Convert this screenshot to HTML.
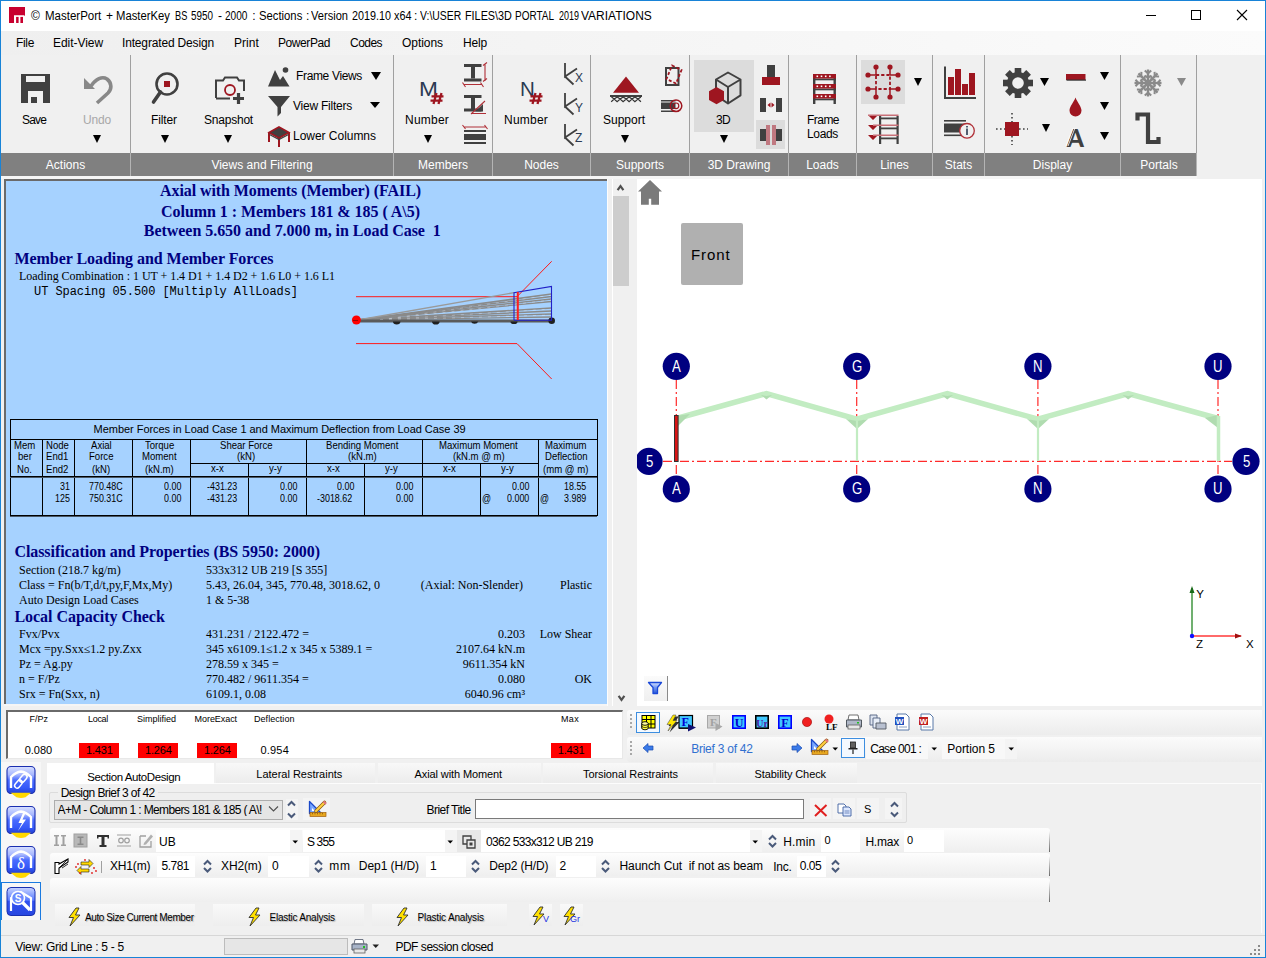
<!DOCTYPE html>
<html><head><meta charset="utf-8">
<style>
*{margin:0;padding:0;box-sizing:border-box}
html,body{width:1266px;height:958px;overflow:hidden;background:#f0f0f0;font-family:"Liberation Sans",sans-serif;font-size:12px;color:#000;position:relative}
.a{position:absolute}
.t{position:absolute;white-space:pre;line-height:1}
svg{position:absolute;overflow:visible}
#border{position:absolute;left:0;top:0;width:1266px;height:958px;border:1px solid #1883d7;z-index:100;pointer-events:none}

</style></head><body>
<div class="a" style="left:0;top:0;width:1266px;height:31px;background:#fff"></div>
<svg style="left:9px;top:7px" width="16" height="16"><path fill="#c8002f" d="M0 0H16V8.3L15.2 9.3V8.2H5V16H0Z"/><rect fill="#c8002f" x="7.1" y="9.9" width="2.5" height="6.1"/><rect fill="#c8002f" x="11.4" y="9.9" width="2.6" height="6.1"/></svg>
<div class="t" style="left:30.90px;top:10.00px;font-size:12px;">©</div>
<div class="t" style="left:44.70px;top:10.00px;font-size:12px;transform:scaleX(0.9593);transform-origin:0 0;">MasterPort</div>
<div class="t" style="left:106.00px;top:10.00px;font-size:12px;">+</div>
<div class="t" style="left:116.20px;top:10.00px;font-size:12px;transform:scaleX(0.9397);transform-origin:0 0;">MasterKey</div>
<div class="t" style="left:174.60px;top:10.00px;font-size:12px;transform:scaleX(0.7680);transform-origin:0 0;">BS</div>
<div class="t" style="left:190.80px;top:10.00px;font-size:12px;transform:scaleX(0.8239);transform-origin:0 0;">5950</div>
<div class="t" style="left:218.00px;top:10.00px;font-size:12px;">-</div>
<div class="t" style="left:225.20px;top:10.00px;font-size:12px;transform:scaleX(0.8426);transform-origin:0 0;">2000</div>
<div class="t" style="left:252.30px;top:10.00px;font-size:12px;">:</div>
<div class="t" style="left:258.90px;top:10.00px;font-size:12px;transform:scaleX(0.9407);transform-origin:0 0;">Sections</div>
<div class="t" style="left:305.90px;top:10.00px;font-size:12px;">:</div>
<div class="t" style="left:311.20px;top:10.00px;font-size:12px;transform:scaleX(0.9243);transform-origin:0 0;">Version</div>
<div class="t" style="left:352.30px;top:10.00px;font-size:12px;transform:scaleX(0.8988);transform-origin:0 0;">2019.10</div>
<div class="t" style="left:394.00px;top:10.00px;font-size:12px;transform:scaleX(0.9040);transform-origin:0 0;">x64</div>
<div class="t" style="left:413.90px;top:10.00px;font-size:12px;">:</div>
<div class="t" style="left:420.20px;top:10.00px;font-size:12px;transform:scaleX(0.8659);transform-origin:0 0;">V:\USER</div>
<div class="t" style="left:464.80px;top:10.00px;font-size:12px;transform:scaleX(0.9014);transform-origin:0 0;">FILES\3D</div>
<div class="t" style="left:515.20px;top:10.00px;font-size:12px;transform:scaleX(0.8314);transform-origin:0 0;">PORTAL</div>
<div class="t" style="left:558.60px;top:10.00px;font-size:12px;transform:scaleX(0.7452);transform-origin:0 0;">2019</div>
<div class="t" style="left:580.70px;top:10.00px;font-size:12px;transform:scaleX(0.9985);transform-origin:0 0;">VARIATIONS</div>
<div class="a" style="left:1146px;top:15px;width:10px;height:1px;background:#000"></div>
<div class="a" style="left:1191px;top:10px;width:10px;height:10px;border:1px solid #000"></div>
<svg style="left:1237px;top:10px" width="10" height="10"><path d="M0 0L10 10M10 0L0 10" stroke="#000" stroke-width="1.1"/></svg>
<div class="a" style="left:0;top:31px;width:1266px;height:24px;background:linear-gradient(90deg,#efefef,#fbfbfb)"></div>
<div class="t" style="left:16.00px;top:37.00px;font-size:12px;letter-spacing:-0.336px;">File</div>
<div class="t" style="left:53.00px;top:37.00px;font-size:12px;letter-spacing:-0.052px;">Edit-View</div>
<div class="t" style="left:122.00px;top:37.00px;font-size:12px;letter-spacing:-0.161px;">Integrated Design</div>
<div class="t" style="left:234.00px;top:37.00px;font-size:12px;letter-spacing:0.062px;">Print</div>
<div class="t" style="left:278.00px;top:37.00px;font-size:12px;letter-spacing:-0.422px;">PowerPad</div>
<div class="t" style="left:350.00px;top:37.00px;font-size:12px;letter-spacing:-0.537px;">Codes</div>
<div class="t" style="left:402.00px;top:37.00px;font-size:12px;letter-spacing:-0.051px;">Options</div>
<div class="t" style="left:463.00px;top:37.00px;font-size:12px;letter-spacing:-0.172px;">Help</div>
<div class="a" style="left:0;top:55px;width:1266px;height:98px;background:#f0f0f0"></div>
<div class="a" style="left:0;top:153px;width:1197px;height:23px;background:#808080"></div>
<div class="t" style="left:45.82px;top:159.00px;font-size:12px;color:#fff;">Actions</div>
<div class="t" style="left:211.41px;top:159.00px;font-size:12px;color:#fff;">Views and Filtering</div>
<div class="t" style="left:417.99px;top:159.00px;font-size:12px;color:#fff;">Members</div>
<div class="t" style="left:524.16px;top:159.00px;font-size:12px;color:#fff;">Nodes</div>
<div class="t" style="left:615.98px;top:159.00px;font-size:12px;color:#fff;">Supports</div>
<div class="t" style="left:707.65px;top:159.00px;font-size:12px;color:#fff;">3D Drawing</div>
<div class="t" style="left:806.15px;top:159.00px;font-size:12px;color:#fff;">Loads</div>
<div class="t" style="left:880.16px;top:159.00px;font-size:12px;color:#fff;">Lines</div>
<div class="t" style="left:944.82px;top:159.00px;font-size:12px;color:#fff;">Stats</div>
<div class="t" style="left:1032.82px;top:159.00px;font-size:12px;color:#fff;">Display</div>
<div class="t" style="left:1140.32px;top:159.00px;font-size:12px;color:#fff;">Portals</div>
<div class="a" style="left:130px;top:55px;width:1px;height:98px;background:#a0a0a0"></div>
<div class="a" style="left:130px;top:153px;width:1px;height:23px;background:#b4b4b4"></div>
<div class="a" style="left:393px;top:55px;width:1px;height:98px;background:#a0a0a0"></div>
<div class="a" style="left:393px;top:153px;width:1px;height:23px;background:#b4b4b4"></div>
<div class="a" style="left:492px;top:55px;width:1px;height:98px;background:#a0a0a0"></div>
<div class="a" style="left:492px;top:153px;width:1px;height:23px;background:#b4b4b4"></div>
<div class="a" style="left:590px;top:55px;width:1px;height:98px;background:#a0a0a0"></div>
<div class="a" style="left:590px;top:153px;width:1px;height:23px;background:#b4b4b4"></div>
<div class="a" style="left:689px;top:55px;width:1px;height:98px;background:#a0a0a0"></div>
<div class="a" style="left:689px;top:153px;width:1px;height:23px;background:#b4b4b4"></div>
<div class="a" style="left:788px;top:55px;width:1px;height:98px;background:#a0a0a0"></div>
<div class="a" style="left:788px;top:153px;width:1px;height:23px;background:#b4b4b4"></div>
<div class="a" style="left:856px;top:55px;width:1px;height:98px;background:#a0a0a0"></div>
<div class="a" style="left:856px;top:153px;width:1px;height:23px;background:#b4b4b4"></div>
<div class="a" style="left:932px;top:55px;width:1px;height:98px;background:#a0a0a0"></div>
<div class="a" style="left:932px;top:153px;width:1px;height:23px;background:#b4b4b4"></div>
<div class="a" style="left:984px;top:55px;width:1px;height:98px;background:#a0a0a0"></div>
<div class="a" style="left:984px;top:153px;width:1px;height:23px;background:#b4b4b4"></div>
<div class="a" style="left:1120px;top:55px;width:1px;height:98px;background:#a0a0a0"></div>
<div class="a" style="left:1120px;top:153px;width:1px;height:23px;background:#b4b4b4"></div>
<div class="a" style="left:1196px;top:55px;width:1px;height:98px;background:#a0a0a0"></div>
<div class="a" style="left:1196px;top:153px;width:1px;height:23px;background:#b4b4b4"></div>
<div class="a" style="left:1px;top:176px;width:1196px;height:3px;background:#f5f5f5"></div>
<svg style="left:21px;top:74px" width="29" height="29"><path fill="#404040" fill-rule="evenodd" d="M0 0H29V29H22V17H7V29H0Z M5 2V8H24V2Z"/><rect x="10" y="23" width="6" height="6" fill="#404040"/></svg>
<div class="t" style="left:22.00px;top:114.00px;font-size:12px;letter-spacing:-0.840px;">Save</div>
<svg style="left:84px;top:75px" width="29" height="29"><path d="M0 3L11 14H0Z" fill="#888"/><path d="M7 11C12 4 18 1 23 4C28 8 28 14 24 18L13 28" stroke="#888" stroke-width="3.6" fill="none"/></svg>
<div class="t" style="left:83.00px;top:114.00px;font-size:12px;color:#a8a8a8;letter-spacing:-0.172px;">Undo</div>
<svg style="left:0;top:0" width="1" height="1"><path d="M93 135H101L97.0 143Z" fill="#000"/></svg>
<svg style="left:150px;top:70px" width="30" height="36"><circle cx="17" cy="14" r="10.5" stroke="#404040" stroke-width="2.6" fill="none"/><path d="M10.5 22L3.5 32" stroke="#404040" stroke-width="3.6" stroke-linecap="round"/><rect x="14" y="11" width="6" height="6" fill="#9e1620"/></svg>
<div class="t" style="left:151.00px;top:114.00px;font-size:12px;letter-spacing:-0.112px;">Filter</div>
<svg style="left:0;top:0" width="1" height="1"><path d="M161 135H169L165.0 143Z" fill="#000"/></svg>
<svg style="left:214px;top:76px" width="34" height="30"><path d="M2 22V4.5H9L11 1.5H23L25 4.5H30V15" stroke="#404040" stroke-width="2" fill="none"/><path d="M2 22.5H16" stroke="#404040" stroke-width="2"/><circle cx="16" cy="14" r="5" stroke="#9e1620" stroke-width="1.8" fill="none"/><path d="M19 22.5H30M24.5 17V28" stroke="#404040" stroke-width="3.2"/></svg>
<div class="t" style="left:204.00px;top:114.00px;font-size:12px;letter-spacing:-0.215px;">Snapshot</div>
<svg style="left:0;top:0" width="1" height="1"><path d="M224 135H232L228.0 143Z" fill="#000"/></svg>
<svg style="left:268px;top:66px" width="24" height="22"><path d="M0 20.5L7 4L12 14L15 10L21.5 20.5Z" fill="#404040"/><circle cx="17.5" cy="4" r="2.8" fill="#404040"/></svg>
<div class="t" style="left:296.00px;top:70.00px;font-size:12px;letter-spacing:-0.345px;">Frame Views</div>
<svg style="left:0;top:0" width="1" height="1"><path d="M371 72H381L376.0 80Z" fill="#000"/></svg>
<svg style="left:268px;top:96px" width="24" height="22"><path d="M0 0H22L13 11V17L9.5 20.5V11Z" fill="#404040"/></svg>
<div class="t" style="left:293.00px;top:100.00px;font-size:12px;letter-spacing:-0.233px;">View Filters</div>
<svg style="left:0;top:0" width="1" height="1"><path d="M370 102H380L375.0 108Z" fill="#000"/></svg>
<svg style="left:268px;top:125px" width="24" height="25"><path d="M11 2L21 7.5L11 13L1 7.5Z" fill="#404040" stroke="#9e1620" stroke-width="1.6"/><path d="M1 8V17M21 8V17M11 13V22" stroke="#9e1620" stroke-width="2"/><path d="M1.5 9.5L11 14.5L20.5 9.5" stroke="#404040" stroke-width="1.4" fill="none"/></svg>
<div class="t" style="left:293.00px;top:130.00px;font-size:12px;letter-spacing:-0.029px;">Lower Columns</div>
<div class="t" style="left:419px;top:78px;font-size:21px;color:#2b3a52;transform:scaleX(1.08);transform-origin:0 0">M</div>
<svg style="left:430px;top:92px" width="15" height="13"><path d="M6.5 1L3.5 12M11.5 1L8.5 12M1.5 4.3H13.5M0.5 8.6H12.5" stroke="#9e1620" stroke-width="2.3"/></svg>
<div class="t" style="left:405.00px;top:114.00px;font-size:12px;letter-spacing:0.219px;">Number</div>
<svg style="left:0;top:0" width="1" height="1"><path d="M424 135H432L428.0 143Z" fill="#000"/></svg>
<svg style="left:462px;top:62px" width="28" height="85"><g fill="#404040"><rect x="2" y="2" width="17.5" height="3"/><rect x="9" y="5" width="4" height="11.5"/><rect x="2" y="16.5" width="17.5" height="3"/><rect x="2" y="33" width="17.5" height="3"/><rect x="9" y="36" width="4" height="11.5"/><rect x="2" y="46.5" width="17.5" height="3"/><path d="M13 49.5L21 49.5L21 42Z"/><rect x="2" y="68" width="22" height="2"/><rect x="2" y="72" width="22" height="6"/><rect x="2" y="80" width="22" height="2"/></g><g stroke="#b03038" stroke-width="1.1" fill="none"><path d="M23 2.5V19M21 3.5L25 0.5M21 19.5L25 16.5M2 22.5H20M0.5 20.5L3.5 25M18.5 20.5L21.5 25"/><path d="M9 52L23 39M9 51.5H24"/><path d="M2 65H24M0.5 63L3.5 67M22.5 63L25.5 67"/></g></svg>
<div class="t" style="left:520px;top:78.5px;font-size:20.5px;color:#2b3a52">N</div>
<svg style="left:529px;top:92px" width="15" height="13"><path d="M6.5 1L3.5 12M11.5 1L8.5 12M1.5 4.3H13.5M0.5 8.6H12.5" stroke="#9e1620" stroke-width="2.3"/></svg>
<div class="t" style="left:504.00px;top:114.00px;font-size:12px;letter-spacing:0.219px;">Number</div>
<svg style="left:563px;top:63.0px" width="24" height="24"><path d="M2 0V13.5L14 5.5M2 13.5L10.5 21.5" stroke="#404040" stroke-width="1.8" fill="none"/></svg>
<div class="t" style="left:575px;top:71.5px;font-size:12px;color:#2b3a52">X</div>
<svg style="left:563px;top:93.3px" width="24" height="24"><path d="M2 0V13.5L14 5.5M2 13.5L10.5 21.5" stroke="#404040" stroke-width="1.8" fill="none"/></svg>
<div class="t" style="left:575px;top:101.8px;font-size:12px;color:#2b3a52">Y</div>
<svg style="left:563px;top:123.6px" width="24" height="24"><path d="M2 0V13.5L14 5.5M2 13.5L10.5 21.5" stroke="#404040" stroke-width="1.8" fill="none"/></svg>
<div class="t" style="left:575px;top:132.1px;font-size:12px;color:#2b3a52">Z</div>
<svg style="left:609px;top:75px" width="36" height="30"><path d="M17 1.5L30 17.8H4Z" fill="#9e1620"/><rect x="1" y="20" width="32" height="2" fill="#404040"/><path d="M2.2 26.7L5.2 24.0L8.1 26.7L11.2 24.0L14.1 26.7L17.2 24.0L20.1 26.7L23.0 24.0L25.9 26.7L29.0 24.0L31.9 26.7M2.5 22.0L5.2 24.0L8.1 22.0L11.2 24.0L14.1 22.0L17.2 24.0L20.1 22.0L23.0 24.0L25.9 22.0L29.0 24.0L31.9 22.0" stroke="#333" stroke-width="1.2" fill="none"/></svg>
<div class="t" style="left:603.00px;top:114.00px;font-size:12px;letter-spacing:-0.004px;">Support</div>
<svg style="left:0;top:0" width="1" height="1"><path d="M621 135H629L625.0 143Z" fill="#000"/></svg>
<svg style="left:663px;top:63px" width="26" height="26"><rect x="3" y="5" width="12.5" height="17" stroke="#404040" stroke-width="2" fill="none"/><path d="M9 2.5L18.5 7L13 20.5L3.5 16Z" stroke="#9e1620" stroke-width="1.8" stroke-dasharray="3 2" fill="none"/></svg>
<svg style="left:660px;top:98px" width="26" height="17"><rect x="1" y="2" width="14.5" height="1.5" fill="#404040"/><rect x="1" y="4.5" width="14.5" height="6.5" fill="#404040"/><rect x="1" y="12.5" width="14.5" height="1.5" fill="#404040"/><circle cx="16" cy="7.8" r="5.8" stroke="#9e1620" stroke-width="1.5" fill="none"/><circle cx="16" cy="7.8" r="2.8" stroke="#9e1620" stroke-width="1.2" fill="none"/></svg>
<div class="a" style="left:694px;top:60px;width:60px;height:72px;background:#dcdcdc"></div>
<svg style="left:706px;top:70px" width="40" height="40"><path d="M10 9.5L22 2.5L34.5 9.5V25.3L22 33.5L10 25.3Z M10 9.5L22 17L34.5 9.5 M22 17V33.5" stroke="#404040" stroke-width="2" fill="none" stroke-linejoin="round"/><path d="M10.5 17L18 21.3V30L10.5 34.3L3 30V21.3Z" fill="#9e1620"/></svg>
<div class="t" style="left:716.00px;top:114.00px;font-size:12px;letter-spacing:-0.672px;">3D</div>
<svg style="left:0;top:0" width="1" height="1"><path d="M720 135H728L724.0 143Z" fill="#000"/></svg>
<svg style="left:760px;top:63px" width="26" height="86"><rect x="7" y="2" width="8" height="12" fill="#404040"/><rect x="2" y="14" width="18" height="8" fill="#9e1620"/><rect x="0" y="35" width="6" height="14" fill="#404040"/><rect x="16" y="35" width="6" height="14" fill="#404040"/><path d="M7.5 42L10.5 39.5V44.5ZM14.5 42L11.5 39.5V44.5Z" fill="#9e1620"/></svg>
<div class="a" style="left:756px;top:120px;width:29px;height:29px;background:#dcdcdc"></div>
<svg style="left:756px;top:120px" width="29" height="29"><rect x="4" y="9" width="6" height="12" fill="#404040"/><rect x="20" y="9" width="6" height="12" fill="#404040"/><rect x="10" y="5" width="4" height="20" fill="#c07880"/><rect x="16" y="5" width="4" height="20" fill="#c07880"/></svg>
<svg style="left:812px;top:73px" width="25" height="32"><g fill="#404040"><rect x="1" y="1" width="2.4" height="30"/><rect x="21.5" y="1" width="2.4" height="30"/><rect x="1" y="5.5" width="23" height="1.8"/><rect x="1" y="15.5" width="23" height="1.8"/><rect x="1" y="25.5" width="23" height="1.8"/></g><g fill="#9e1620"><rect x="1" y="1" width="23" height="4.5"/><rect x="1" y="11" width="23" height="4.5"/><rect x="1" y="21" width="23" height="4.5"/></g><g fill="#fff"><rect x="4.5" y="2.5" width="1.6" height="1.6"/><rect x="8.7" y="2.5" width="1.6" height="1.6"/><rect x="12.9" y="2.5" width="1.6" height="1.6"/><rect x="17.1" y="2.5" width="1.6" height="1.6"/><rect x="4.5" y="12.5" width="1.6" height="1.6"/><rect x="8.7" y="12.5" width="1.6" height="1.6"/><rect x="12.9" y="12.5" width="1.6" height="1.6"/><rect x="17.1" y="12.5" width="1.6" height="1.6"/><rect x="4.5" y="22.5" width="1.6" height="1.6"/><rect x="8.7" y="22.5" width="1.6" height="1.6"/><rect x="12.9" y="22.5" width="1.6" height="1.6"/><rect x="17.1" y="22.5" width="1.6" height="1.6"/></g></svg>
<div class="t" style="left:807.00px;top:114.00px;font-size:12px;letter-spacing:-0.534px;">Frame</div>
<div class="t" style="left:807.00px;top:128.00px;font-size:12px;letter-spacing:-0.341px;">Loads</div>
<div class="a" style="left:861px;top:60px;width:44px;height:44px;background:#dcdcdc"></div>
<svg style="left:861px;top:60px" width="44" height="44"><path d="M15 15H29V29H15Z" stroke="#9e1620" stroke-width="1.8" stroke-dasharray="3.2 2" fill="none"/><g stroke="#9e1620" stroke-width="1.5"><path d="M15 7V15M29 7V15M15 29V37M29 29V37M7 15H15M29 15H37M7 29H15M29 29H37"/></g><g fill="#9e1620"><circle cx="15" cy="7" r="2.6"/><circle cx="29" cy="7" r="2.6"/><circle cx="15" cy="37" r="2.6"/><circle cx="29" cy="37" r="2.6"/><circle cx="7" cy="15" r="2.6"/><circle cx="37" cy="15" r="2.6"/><circle cx="7" cy="29" r="2.6"/><circle cx="37" cy="29" r="2.6"/></g></svg>
<svg style="left:0;top:0" width="1" height="1"><path d="M914 78H922L918.0 86Z" fill="#000"/></svg>
<svg style="left:867px;top:114px" width="34" height="32"><g fill="#404040"><rect x="12" y="2" width="2.2" height="28"/><rect x="29.5" y="2" width="2.2" height="28"/><rect x="12" y="3.5" width="19" height="1.8"/><rect x="12" y="13.5" width="19" height="1.8"/><rect x="12" y="23.5" width="19" height="1.8"/></g><g fill="#9e1620"><path d="M1 1H11L6 6Z M1 11H11L6 16Z M1 21H11L6 26Z"/></g><g fill="#c87078"><rect x="1" y="0.5" width="30.5" height="1.5"/><rect x="6" y="10.5" width="25.5" height="1.5"/><rect x="6" y="20.5" width="25.5" height="1.5"/></g></svg>
<svg style="left:943px;top:66px" width="36" height="34"><path d="M2 0.5V32H33" stroke="#404040" stroke-width="2" fill="none"/><g fill="#9e1620"><rect x="5" y="11" width="6" height="18"/><rect x="12" y="3" width="6" height="26"/><rect x="19" y="18" width="6" height="11"/><rect x="26" y="7" width="6" height="22"/></g></svg>
<svg style="left:943px;top:119px" width="34" height="22"><g fill="#404040"><rect x="1" y="1" width="22" height="1.6"/><rect x="1" y="4.5" width="22" height="9"/><rect x="1" y="15.5" width="22" height="1.6"/></g><circle cx="24" cy="11.8" r="7.3" fill="#f0f0f0" stroke="#b03038" stroke-width="1.3"/><rect x="23.2" y="9.5" width="1.6" height="6.5" fill="#2b3a52"/><rect x="23.2" y="7" width="1.6" height="1.5" fill="#2b3a52"/></svg>
<svg style="left:1003px;top:68px" width="31" height="31"><g transform="translate(15 15)"><g fill="#404040"><rect x="-3.3" y="-15" width="6.6" height="6" transform="rotate(0)"/><rect x="-3.3" y="-15" width="6.6" height="6" transform="rotate(45)"/><rect x="-3.3" y="-15" width="6.6" height="6" transform="rotate(90)"/><rect x="-3.3" y="-15" width="6.6" height="6" transform="rotate(135)"/><rect x="-3.3" y="-15" width="6.6" height="6" transform="rotate(180)"/><rect x="-3.3" y="-15" width="6.6" height="6" transform="rotate(225)"/><rect x="-3.3" y="-15" width="6.6" height="6" transform="rotate(270)"/><rect x="-3.3" y="-15" width="6.6" height="6" transform="rotate(315)"/></g><circle r="11" fill="#404040"/><circle r="5.8" fill="#f0f0f0"/></g></svg>
<svg style="left:0;top:0" width="1" height="1"><path d="M1040 78H1049L1044.5 86Z" fill="#000"/></svg>
<svg style="left:995px;top:112px" width="36" height="36"><rect x="10" y="10" width="14" height="14" fill="#9e1620"/><path d="M1 17H10M24 17H33M17 1V10M17 24V33" stroke="#404040" stroke-width="1.6" stroke-dasharray="1.6 2.4"/></svg>
<svg style="left:0;top:0" width="1" height="1"><path d="M1042 124H1050L1046.0 132Z" fill="#000"/></svg>
<svg style="left:1066px;top:74px" width="22" height="8"><rect x="0" y="0" width="19.5" height="6" fill="#9e1620"/><rect x="0.5" y="5.5" width="19.5" height="1.2" fill="#333"/></svg>
<svg style="left:0;top:0" width="1" height="1"><path d="M1100 72H1109L1104.5 80Z" fill="#000"/></svg>
<svg style="left:1069px;top:97px" width="14" height="21"><path d="M6.5 0.5C8 5 12.5 9.5 12.5 13.5A6 6 0 0 1 0.5 13.5C0.5 9.5 5 5 6.5 0.5Z" fill="#9e1620"/></svg>
<svg style="left:0;top:0" width="1" height="1"><path d="M1100 102H1109L1104.5 110Z" fill="#000"/></svg>
<div class="t" style="left:1066px;top:124.5px;font-size:26px;font-weight:700;color:#404040">A</div>
<svg style="left:1065px;top:127px" width="10" height="20"><path d="M1 19L8 1M3 19L10 1" stroke="#fff" stroke-width="0.8"/></svg>
<svg style="left:0;top:0" width="1" height="1"><path d="M1100 132H1109L1104.5 140Z" fill="#000"/></svg>
<svg style="left:1133px;top:68px" width="30" height="30"><g transform="translate(15 15)" stroke="#8a8a8a" fill="none"><g transform="rotate(0)"><path d="M0 0V-13.5" stroke-width="2.4"/><path d="M-3.2 -12.5L0 -9.5L3.2 -12.5M-3 -7.5L0 -5L3 -7.5" stroke-width="2"/></g><g transform="rotate(45)"><path d="M0 0V-13.5" stroke-width="2.4"/><path d="M-3.2 -12.5L0 -9.5L3.2 -12.5M-3 -7.5L0 -5L3 -7.5" stroke-width="2"/></g><g transform="rotate(90)"><path d="M0 0V-13.5" stroke-width="2.4"/><path d="M-3.2 -12.5L0 -9.5L3.2 -12.5M-3 -7.5L0 -5L3 -7.5" stroke-width="2"/></g><g transform="rotate(135)"><path d="M0 0V-13.5" stroke-width="2.4"/><path d="M-3.2 -12.5L0 -9.5L3.2 -12.5M-3 -7.5L0 -5L3 -7.5" stroke-width="2"/></g><g transform="rotate(180)"><path d="M0 0V-13.5" stroke-width="2.4"/><path d="M-3.2 -12.5L0 -9.5L3.2 -12.5M-3 -7.5L0 -5L3 -7.5" stroke-width="2"/></g><g transform="rotate(225)"><path d="M0 0V-13.5" stroke-width="2.4"/><path d="M-3.2 -12.5L0 -9.5L3.2 -12.5M-3 -7.5L0 -5L3 -7.5" stroke-width="2"/></g><g transform="rotate(270)"><path d="M0 0V-13.5" stroke-width="2.4"/><path d="M-3.2 -12.5L0 -9.5L3.2 -12.5M-3 -7.5L0 -5L3 -7.5" stroke-width="2"/></g><g transform="rotate(315)"><path d="M0 0V-13.5" stroke-width="2.4"/><path d="M-3.2 -12.5L0 -9.5L3.2 -12.5M-3 -7.5L0 -5L3 -7.5" stroke-width="2"/></g><circle r="3.5" fill="#8a8a8a" stroke="none"/></g></svg>
<svg style="left:0;top:0" width="1" height="1"><path d="M1177 78H1186L1181.5 86Z" fill="#8a8a8a"/></svg>
<svg style="left:1135px;top:112px" width="27" height="34"><path d="M2.5 8.5V2.5H13V30H23.5V25" stroke="#404040" stroke-width="4.2" fill="none"/></svg>
<div class="a" style="left:1px;top:176px;width:1196px;height:3px;background:#f5f5f5"></div>
<div class="a" style="left:4px;top:179px;width:604px;height:527px;background:#f5f5f5"></div>
<div class="a" style="left:4px;top:179px;width:604px;height:2px;background:#6a6a6a"></div>
<div class="a" style="left:4px;top:179px;width:2px;height:525px;background:#6a6a6a"></div>
<div class="a" style="left:6px;top:181px;width:601px;height:523px;background:#a6d2ff;overflow:hidden"></div>
<div class="t" style="left:160.00px;top:183.00px;font-size:16px;font-family:'Liberation Serif',serif;font-weight:700;color:#000080;letter-spacing:-0.078px;">Axial with Moments (Member) (FAIL)</div>
<div class="t" style="left:161.00px;top:204.00px;font-size:16px;font-family:'Liberation Serif',serif;font-weight:700;color:#000080;letter-spacing:-0.041px;">Column 1 : Members 181 &amp; 185 ( A\5)</div>
<div class="t" style="left:143.80px;top:223.00px;font-size:16px;font-family:'Liberation Serif',serif;font-weight:700;color:#000080;letter-spacing:-0.040px;">Between 5.650 and 7.000 m, in Load Case  1</div>
<div class="t" style="left:14.40px;top:251.00px;font-size:16px;font-family:'Liberation Serif',serif;font-weight:700;color:#000080;letter-spacing:-0.044px;">Member Loading and Member Forces</div>
<div class="t" style="left:19.00px;top:270.00px;font-size:12px;font-family:'Liberation Serif',serif;letter-spacing:-0.046px;">Loading Combination : 1 UT + 1.4 D1 + 1.4 D2 + 1.6 L0 + 1.6 L1</div>
<div class="t" style="left:34.00px;top:286.00px;font-size:12px;font-family:'Liberation Mono',monospace;letter-spacing:-0.066px;">UT Spacing 05.500 [Multiply AllLoads]</div>
<svg style="left:0;top:0" width="1" height="1"><path d="M356 296.7H517L551.7 261.3M356 343.6H517L551.7 379" stroke="#ff1a1a" stroke-width="1" fill="none"/><path d="M358 320L551.5 294" stroke="#8a8a8a" stroke-width="1.6"/><path d="M358 320L551.5 296.5" stroke="#8a8a8a" stroke-width="1.6"/><path d="M358 320L551.5 299" stroke="#8a8a8a" stroke-width="1.6"/><path d="M358 320L551.5 301.5" stroke="#8a8a8a" stroke-width="1.4"/><path d="M358 320L551.5 308" stroke="#8a8a8a" stroke-width="1.6"/><path d="M358 320L551.5 311" stroke="#8a8a8a" stroke-width="1.4"/><path d="M358 320L551.5 314" stroke="#8a8a8a" stroke-width="1.4"/><path d="M358 320L551.5 317" stroke="#8a8a8a" stroke-width="1.4"/><path d="M358 320L514 292.7" stroke="#9a9a9a" stroke-width="1.3"/><path d="M380 320L551.5 295" stroke="#e8f0ff" stroke-width="0.5" stroke-dasharray="3 6" opacity="0.7"/><path d="M380 320L551.5 300" stroke="#e8f0ff" stroke-width="0.5" stroke-dasharray="3 6" opacity="0.7"/><path d="M380 320L551.5 309" stroke="#e8f0ff" stroke-width="0.5" stroke-dasharray="3 6" opacity="0.7"/><path d="M380 320L551.5 315" stroke="#e8f0ff" stroke-width="0.5" stroke-dasharray="3 6" opacity="0.7"/><path d="M358 321H552" stroke="#5a5a5a" stroke-width="3"/><g fill="#202020"><path d="M393 321.5A3.7 3 0 0 0 400.4 321.5Z"/><path d="M432 321.5A3.7 3 0 0 0 439.6 321.5Z"/><path d="M471 321.5A3.7 3 0 0 0 478.2 321.5Z"/><path d="M510.5 321.5A3.5 2.6 0 0 0 517.5 321.5Z"/><circle cx="551.7" cy="320.8" r="3.3"/></g><path d="M514 320.3V292.7L551.5 286.4V320.3H514" stroke="#2020c8" stroke-width="1.1" fill="none"/><path d="M517.8 292V320" stroke="#ff2020" stroke-width="2"/><circle cx="356.4" cy="320" r="4.5" fill="#ff0000"/><path d="M353 320.5H358" stroke="#a00000" stroke-width="1"/></svg>
<svg style="left:0;top:0" width="1" height="1"><g stroke="#000" stroke-width="1" fill="none" shape-rendering="crispEdges"><rect x="10.5" y="419.5" width="586.5" height="96"/><path d="M10 439.5H597 M190 463.5H538 M10 476.5H597"/><path d="M42.5 439V516 M74.5 439V516 M132.5 439V516 M190.5 439V516 M248.5 463V516 M306.5 439V516 M364.5 463V516 M422.5 439V516 M480.5 463V516 M538.5 439V516"/></g><path d="M10 477.5H597M10 516.5H597" stroke="#4a5866" stroke-width="1" shape-rendering="crispEdges"/></svg>
<div class="t" style="left:93.60px;top:424.00px;font-size:11px;letter-spacing:-0.041px;">Member Forces in Load Case 1 and Maximum Deflection from Load Case 39</div>
<div class="t" style="left:13.86px;top:440.00px;font-size:11px;transform:scaleX(0.87);transform-origin:0 0;">Mem</div>
<div class="t" style="left:17.58px;top:451.00px;font-size:11px;transform:scaleX(0.87);transform-origin:0 0;">ber</div>
<div class="t" style="left:17.05px;top:464.00px;font-size:11px;transform:scaleX(0.87);transform-origin:0 0;">No.</div>
<div class="t" style="left:45.70px;top:440.00px;font-size:11px;transform:scaleX(0.87);transform-origin:0 0;">Node</div>
<div class="t" style="left:45.70px;top:451.00px;font-size:11px;transform:scaleX(0.87);transform-origin:0 0;">End1</div>
<div class="t" style="left:45.70px;top:464.00px;font-size:11px;transform:scaleX(0.87);transform-origin:0 0;">End2</div>
<div class="t" style="left:91.13px;top:440.00px;font-size:11px;transform:scaleX(0.87);transform-origin:0 0;">Axial</div>
<div class="t" style="left:89.27px;top:451.00px;font-size:11px;transform:scaleX(0.87);transform-origin:0 0;">Force</div>
<div class="t" style="left:92.46px;top:464.00px;font-size:11px;transform:scaleX(0.87);transform-origin:0 0;">(kN)</div>
<div class="t" style="left:144.87px;top:440.00px;font-size:11px;transform:scaleX(0.87);transform-origin:0 0;">Torque</div>
<div class="t" style="left:142.21px;top:451.00px;font-size:11px;transform:scaleX(0.87);transform-origin:0 0;">Moment</div>
<div class="t" style="left:145.15px;top:464.00px;font-size:11px;transform:scaleX(0.87);transform-origin:0 0;">(kN.m)</div>
<div class="t" style="left:220.17px;top:440.00px;font-size:11px;transform:scaleX(0.87);transform-origin:0 0;">Shear Force</div>
<div class="t" style="left:237.46px;top:451.00px;font-size:11px;transform:scaleX(0.87);transform-origin:0 0;">(kN)</div>
<div class="t" style="left:211.12px;top:463.00px;font-size:11px;transform:scaleX(0.87);transform-origin:0 0;">x-x</div>
<div class="t" style="left:269.12px;top:463.00px;font-size:11px;transform:scaleX(0.87);transform-origin:0 0;">y-y</div>
<div class="t" style="left:326.32px;top:440.00px;font-size:11px;transform:scaleX(0.87);transform-origin:0 0;">Bending Moment</div>
<div class="t" style="left:348.14px;top:451.00px;font-size:11px;transform:scaleX(0.87);transform-origin:0 0;">(kN.m)</div>
<div class="t" style="left:327.12px;top:463.00px;font-size:11px;transform:scaleX(0.87);transform-origin:0 0;">x-x</div>
<div class="t" style="left:385.12px;top:463.00px;font-size:11px;transform:scaleX(0.87);transform-origin:0 0;">y-y</div>
<div class="t" style="left:439.15px;top:440.00px;font-size:11px;transform:scaleX(0.87);transform-origin:0 0;">Maximum Moment</div>
<div class="t" style="left:452.64px;top:451.00px;font-size:11px;transform:scaleX(0.87);transform-origin:0 0;">(kN.m @ m)</div>
<div class="t" style="left:443.12px;top:463.00px;font-size:11px;transform:scaleX(0.87);transform-origin:0 0;">x-x</div>
<div class="t" style="left:501.12px;top:463.00px;font-size:11px;transform:scaleX(0.87);transform-origin:0 0;">y-y</div>
<div class="t" style="left:545.26px;top:440.00px;font-size:11px;transform:scaleX(0.87);transform-origin:0 0;">Maximum</div>
<div class="t" style="left:544.72px;top:451.00px;font-size:11px;transform:scaleX(0.87);transform-origin:0 0;">Deflection</div>
<div class="t" style="left:543.33px;top:464.00px;font-size:11px;transform:scaleX(0.87);transform-origin:0 0;">(mm @ m)</div>
<div class="t" style="left:59.78px;top:481.00px;font-size:11px;transform:scaleX(0.81);transform-origin:0 0;">31</div>
<div class="t" style="left:54.83px;top:493.00px;font-size:11px;transform:scaleX(0.81);transform-origin:0 0;">125</div>
<div class="t" style="left:88.70px;top:481.00px;font-size:11px;transform:scaleX(0.81);transform-origin:0 0;">770.48C</div>
<div class="t" style="left:88.70px;top:493.00px;font-size:11px;transform:scaleX(0.81);transform-origin:0 0;">750.31C</div>
<div class="t" style="left:163.65px;top:481.00px;font-size:11px;transform:scaleX(0.81);transform-origin:0 0;">0.00</div>
<div class="t" style="left:163.65px;top:493.00px;font-size:11px;transform:scaleX(0.81);transform-origin:0 0;">0.00</div>
<div class="t" style="left:206.78px;top:481.00px;font-size:11px;transform:scaleX(0.81);transform-origin:0 0;">-431.23</div>
<div class="t" style="left:206.78px;top:493.00px;font-size:11px;transform:scaleX(0.81);transform-origin:0 0;">-431.23</div>
<div class="t" style="left:279.65px;top:481.00px;font-size:11px;transform:scaleX(0.81);transform-origin:0 0;">0.00</div>
<div class="t" style="left:279.65px;top:493.00px;font-size:11px;transform:scaleX(0.81);transform-origin:0 0;">0.00</div>
<div class="t" style="left:336.95px;top:481.00px;font-size:11px;transform:scaleX(0.81);transform-origin:0 0;">0.00</div>
<div class="t" style="left:316.82px;top:493.00px;font-size:11px;transform:scaleX(0.81);transform-origin:0 0;">-3018.62</div>
<div class="t" style="left:395.65px;top:481.00px;font-size:11px;transform:scaleX(0.81);transform-origin:0 0;">0.00</div>
<div class="t" style="left:395.65px;top:493.00px;font-size:11px;transform:scaleX(0.81);transform-origin:0 0;">0.00</div>
<div class="t" style="left:511.65px;top:481.00px;font-size:11px;transform:scaleX(0.81);transform-origin:0 0;">0.00</div>
<div class="t" style="left:481.50px;top:493.00px;font-size:11px;transform:scaleX(0.81);transform-origin:0 0;">@</div>
<div class="t" style="left:506.70px;top:493.00px;font-size:11px;transform:scaleX(0.81);transform-origin:0 0;">0.000</div>
<div class="t" style="left:564.10px;top:481.00px;font-size:11px;transform:scaleX(0.81);transform-origin:0 0;">18.55</div>
<div class="t" style="left:540.00px;top:493.00px;font-size:11px;transform:scaleX(0.81);transform-origin:0 0;">@</div>
<div class="t" style="left:564.10px;top:493.00px;font-size:11px;transform:scaleX(0.81);transform-origin:0 0;">3.989</div>
<div class="t" style="left:14.40px;top:544.00px;font-size:16px;font-family:'Liberation Serif',serif;font-weight:700;color:#000080;letter-spacing:-0.067px;">Classification and Properties (BS 5950: 2000)</div>
<div class="t" style="left:19.00px;top:564.00px;font-size:12px;font-family:'Liberation Serif',serif;">Section (218.7 kg/m)</div>
<div class="t" style="left:206.00px;top:564.00px;font-size:12px;font-family:'Liberation Serif',serif;">533x312 UB 219 [S 355]</div>
<div class="t" style="left:19.00px;top:579.00px;font-size:12px;font-family:'Liberation Serif',serif;">Class = Fn(b/T,d/t,py,F,Mx,My)</div>
<div class="t" style="left:206.00px;top:579.00px;font-size:12px;font-family:'Liberation Serif',serif;">5.43, 26.04, 345, 770.48, 3018.62, 0</div>
<div class="t" style="left:420.80px;top:579.00px;font-size:12px;font-family:'Liberation Serif',serif;">(Axial: Non-Slender)</div>
<div class="t" style="left:560.00px;top:579.00px;font-size:12px;font-family:'Liberation Serif',serif;">Plastic</div>
<div class="t" style="left:19.00px;top:594.00px;font-size:12px;font-family:'Liberation Serif',serif;">Auto Design Load Cases</div>
<div class="t" style="left:206.00px;top:594.00px;font-size:12px;font-family:'Liberation Serif',serif;">1 &amp; 5-38</div>
<div class="t" style="left:14.40px;top:609.00px;font-size:16px;font-family:'Liberation Serif',serif;font-weight:700;color:#000080;letter-spacing:-0.035px;">Local Capacity Check</div>
<div class="t" style="left:19.00px;top:628.00px;font-size:12px;font-family:'Liberation Serif',serif;">Fvx/Pvx</div>
<div class="t" style="left:206.00px;top:628.00px;font-size:12px;font-family:'Liberation Serif',serif;">431.231 / 2122.472 =</div>
<div class="t" style="left:498.00px;top:628.00px;font-size:12px;font-family:'Liberation Serif',serif;">0.203</div>
<div class="t" style="left:539.67px;top:628.00px;font-size:12px;font-family:'Liberation Serif',serif;">Low Shear</div>
<div class="t" style="left:19.00px;top:643.00px;font-size:12px;font-family:'Liberation Serif',serif;">Mcx =py.Sxx≤1.2 py.Zxx</div>
<div class="t" style="left:206.00px;top:643.00px;font-size:12px;font-family:'Liberation Serif',serif;">345 x6109.1≤1.2 x 345 x 5389.1 =</div>
<div class="t" style="left:456.00px;top:643.00px;font-size:12px;font-family:'Liberation Serif',serif;">2107.64 kN.m</div>
<div class="t" style="left:19.00px;top:658.00px;font-size:12px;font-family:'Liberation Serif',serif;">Pz = Ag.py</div>
<div class="t" style="left:206.00px;top:658.00px;font-size:12px;font-family:'Liberation Serif',serif;">278.59 x 345 =</div>
<div class="t" style="left:462.77px;top:658.00px;font-size:12px;font-family:'Liberation Serif',serif;">9611.354 kN</div>
<div class="t" style="left:19.00px;top:673.00px;font-size:12px;font-family:'Liberation Serif',serif;">n = F/Pz</div>
<div class="t" style="left:206.00px;top:673.00px;font-size:12px;font-family:'Liberation Serif',serif;">770.482 / 9611.354 =</div>
<div class="t" style="left:498.00px;top:673.00px;font-size:12px;font-family:'Liberation Serif',serif;">0.080</div>
<div class="t" style="left:574.66px;top:673.00px;font-size:12px;font-family:'Liberation Serif',serif;">OK</div>
<div class="t" style="left:19.00px;top:688.00px;font-size:12px;font-family:'Liberation Serif',serif;">Srx = Fn(Sxx, n)</div>
<div class="t" style="left:206.00px;top:688.00px;font-size:12px;font-family:'Liberation Serif',serif;">6109.1, 0.08</div>
<div class="t" style="left:464.73px;top:688.00px;font-size:12px;font-family:'Liberation Serif',serif;">6040.96 cm³</div>
<div class="a" style="left:612px;top:179px;width:1px;height:527px;background:#fff"></div>
<div class="a" style="left:607px;top:179px;width:1px;height:527px;background:#fdfdfd"></div>
<div class="a" style="left:613px;top:179px;width:17px;height:527px;background:#f0f0f0"></div>
<div class="a" style="left:613px;top:196px;width:16px;height:90px;background:#cdcdcd"></div>
<svg style="left:615px;top:184px" width="12" height="10"><path d="M2.6 6.2L5.5 2.2L8.4 6.2" stroke="#505050" stroke-width="2.2" fill="none"/></svg>
<svg style="left:615.5px;top:693px" width="12" height="10"><path d="M2.6 2.8L5.5 6.8L8.4 2.8" stroke="#505050" stroke-width="2.2" fill="none"/></svg>
<div class="a" style="left:630px;top:179px;width:7px;height:527px;background:#f0f0f0"></div>
<div class="a" style="left:637px;top:179px;width:625px;height:527px;background:#fff"></div>
<svg style="left:637px;top:179px" width="27" height="27"><path d="M13 1L25 12.6H22V25.8H14.2V19.8H11.8V25.8H4V12.6H1Z" fill="#7a7a7a"/></svg>
<div class="a" style="left:681px;top:223px;width:62px;height:62px;background:#b0b0b0;border-radius:2px"></div>
<div class="t" style="left:691.00px;top:247.00px;font-size:15px;letter-spacing:0.917px;color:#000;">Front</div>
<svg style="left:0;top:0" width="1" height="1"><g stroke="#ff2a2a" stroke-width="1.2" stroke-dasharray="9 3 2 3" fill="none"><path d="M663 461.3H1232"/><path d="M676.3 380V475M856.7 380V475M1037.9 380V475M1218 380V475"/></g><g fill="none" stroke="#c2ecc2" stroke-width="5.5" stroke-linejoin="miter"><path d="M676.5 418.5L766.5 393.5L856.7 419.2L947.3 393.5L1037.9 419.2L1128.2 393.5L1218 418.5"/></g><g fill="#b0dcb0"><path d="M676 416L690 414L677 427Z"/><path d="M846 419L857 429L868 419L857 421Z"/><path d="M1027 419L1038 429L1049 419L1038 421Z"/><path d="M1218 415L1205 418L1218 428Z"/><path d="M761 395L766.5 399.5L772 395L766.5 396Z"/><path d="M941.5 395L947.3 399.5L953 395L947.3 396Z"/><path d="M1122.5 395L1128.2 399.5L1134 395L1128.2 396Z"/></g><path d="M857 421V461M1038 421V461" stroke="#c2ecc2" stroke-width="2.2"/><path d="M1218.5 416V461" stroke="#c2ecc2" stroke-width="3.5"/><rect x="674.5" y="415.5" width="3.6" height="46" fill="#d81414" stroke="#303030" stroke-width="1"/></svg>
<svg style="left:0;top:0" width="1" height="1"><circle cx="676.3" cy="366.3" r="13.6" fill="#000080"/></svg>
<div class="t" style="left:672.09px;top:358.00px;font-size:16.5px;color:#fff;transform:scaleX(0.8);transform-origin:0 0;">A</div>
<svg style="left:0;top:0" width="1" height="1"><circle cx="676.3" cy="489" r="13.6" fill="#000080"/></svg>
<div class="t" style="left:672.09px;top:480.00px;font-size:16.5px;color:#fff;transform:scaleX(0.8);transform-origin:0 0;">A</div>
<svg style="left:0;top:0" width="1" height="1"><circle cx="856.7" cy="366.3" r="13.6" fill="#000080"/></svg>
<div class="t" style="left:851.76px;top:358.00px;font-size:16.5px;color:#fff;transform:scaleX(0.8);transform-origin:0 0;">G</div>
<svg style="left:0;top:0" width="1" height="1"><circle cx="856.7" cy="489" r="13.6" fill="#000080"/></svg>
<div class="t" style="left:851.76px;top:480.00px;font-size:16.5px;color:#fff;transform:scaleX(0.8);transform-origin:0 0;">G</div>
<svg style="left:0;top:0" width="1" height="1"><circle cx="1037.9" cy="366.3" r="13.6" fill="#000080"/></svg>
<div class="t" style="left:1033.33px;top:358.00px;font-size:16.5px;color:#fff;transform:scaleX(0.8);transform-origin:0 0;">N</div>
<svg style="left:0;top:0" width="1" height="1"><circle cx="1037.9" cy="489" r="13.6" fill="#000080"/></svg>
<div class="t" style="left:1033.33px;top:480.00px;font-size:16.5px;color:#fff;transform:scaleX(0.8);transform-origin:0 0;">N</div>
<svg style="left:0;top:0" width="1" height="1"><circle cx="1218" cy="366.3" r="13.6" fill="#000080"/></svg>
<div class="t" style="left:1213.43px;top:358.00px;font-size:16.5px;color:#fff;transform:scaleX(0.8);transform-origin:0 0;">U</div>
<svg style="left:0;top:0" width="1" height="1"><circle cx="1218" cy="489" r="13.6" fill="#000080"/></svg>
<div class="t" style="left:1213.43px;top:480.00px;font-size:16.5px;color:#fff;transform:scaleX(0.8);transform-origin:0 0;">U</div>
<svg style="left:0;top:0" width="1" height="1"><circle cx="649" cy="461.3" r="13.6" fill="#000080"/></svg>
<div class="t" style="left:645.53px;top:453.00px;font-size:16.5px;color:#fff;transform:scaleX(0.8);transform-origin:0 0;">5</div>
<svg style="left:0;top:0" width="1" height="1"><circle cx="1246" cy="461.3" r="13.6" fill="#000080"/></svg>
<div class="t" style="left:1242.53px;top:453.00px;font-size:16.5px;color:#fff;transform:scaleX(0.8);transform-origin:0 0;">5</div>
<svg style="left:0;top:0" width="1" height="1"><path d="M1192 636V588" stroke="#70b070" stroke-width="2"/><path d="M1192 586L1194.5 593H1189.5Z" fill="#1a6a1a"/><path d="M1192 636H1241" stroke="#ff6a6a" stroke-width="2"/><path d="M1242 636L1235 633.5V638.5Z" fill="#a01010"/><circle cx="1192" cy="636" r="2.2" fill="#1010ff"/></svg>
<div class="t" style="left:1196.20px;top:589.00px;font-size:11.5px;">Y</div>
<div class="t" style="left:1196.00px;top:639.00px;font-size:11.5px;">Z</div>
<div class="t" style="left:1246.00px;top:639.00px;font-size:11.5px;">X</div>
<div class="a" style="left:644px;top:676px;width:24px;height:25px;background:linear-gradient(#fbfbfb,#efefef);border-right:1px solid #8a8a8a"></div>
<svg style="left:646px;top:680px" width="20" height="18"><defs><linearGradient id="fg" x1="0" y1="0" x2="0" y2="1"><stop offset="0" stop-color="#d8e4ff"/><stop offset="0.5" stop-color="#6a90f0"/><stop offset="1" stop-color="#2a5ad8"/></linearGradient></defs><path d="M2.5 2.5H15.5L11.5 7.5V13.5H7V7.5Z" fill="url(#fg)" stroke="#1a48d8" stroke-width="1.3" stroke-linejoin="round"/></svg>
<div class="a" style="left:1262px;top:179px;width:3px;height:527px;background:#f0f0f0"></div>
<div class="a" style="left:630px;top:179px;width:7px;height:527px;background:#f0f0f0"></div>
<div class="a" style="left:6px;top:710px;width:617px;height:49px;background:#fff;border-top:2px solid #6a6a6a;border-left:2px solid #6a6a6a;border-right:1px solid #e8e8e8;border-bottom:1px solid #e8e8e8"></div>
<div class="t" style="left:29.40px;top:715.00px;font-size:9px;letter-spacing:0.046px;">F/Pz</div>
<div class="t" style="left:88.00px;top:715.00px;font-size:9px;letter-spacing:-0.303px;">Local</div>
<div class="t" style="left:137.00px;top:715.00px;font-size:9px;letter-spacing:-0.002px;">Simplified</div>
<div class="t" style="left:194.60px;top:715.00px;font-size:9px;letter-spacing:-0.068px;">MoreExact</div>
<div class="t" style="left:254.00px;top:715.00px;font-size:9px;letter-spacing:0.047px;">Deflection</div>
<div class="t" style="left:561.00px;top:715.00px;font-size:9px;letter-spacing:0.328px;">Max</div>
<div class="t" style="left:24.70px;top:745.00px;font-size:11px;letter-spacing:-0.006px;">0.080</div>
<div class="a" style="left:79px;top:743px;width:40.0px;height:15px;background:#ff0000"></div>
<div class="t" style="left:86.05px;top:745.00px;font-size:11px;letter-spacing:-0.206px;">1.431</div>
<div class="a" style="left:137.8px;top:743px;width:40.4px;height:15px;background:#ff0000"></div>
<div class="t" style="left:145.05px;top:745.00px;font-size:11px;letter-spacing:-0.206px;">1.264</div>
<div class="a" style="left:197.2px;top:743px;width:39.7px;height:15px;background:#ff0000"></div>
<div class="t" style="left:204.10px;top:745.00px;font-size:11px;letter-spacing:-0.206px;">1.264</div>
<div class="a" style="left:551px;top:743px;width:39.5px;height:15px;background:#ff0000"></div>
<div class="t" style="left:557.80px;top:745.00px;font-size:11px;letter-spacing:-0.206px;">1.431</div>
<div class="t" style="left:260.40px;top:745.00px;font-size:11px;letter-spacing:0.214px;">0.954</div>
<div class="a" style="left:627px;top:710px;width:635px;height:25px;background:linear-gradient(#fbfbfb,#ececec);border-radius:3px 0 0 3px"></div>
<div class="a" style="left:627px;top:737px;width:635px;height:25px;background:linear-gradient(#fbfbfb,#ececec);border-radius:3px 0 0 3px"></div>
<div class="a" style="left:630px;top:714px;width:2px;height:2px;background:#a8a8a8"></div>
<div class="a" style="left:630px;top:718px;width:2px;height:2px;background:#a8a8a8"></div>
<div class="a" style="left:630px;top:722px;width:2px;height:2px;background:#a8a8a8"></div>
<div class="a" style="left:630px;top:726px;width:2px;height:2px;background:#a8a8a8"></div>
<div class="a" style="left:630px;top:741px;width:2px;height:2px;background:#a8a8a8"></div>
<div class="a" style="left:630px;top:745px;width:2px;height:2px;background:#a8a8a8"></div>
<div class="a" style="left:630px;top:749px;width:2px;height:2px;background:#a8a8a8"></div>
<div class="a" style="left:630px;top:753px;width:2px;height:2px;background:#a8a8a8"></div>
<div class="a" style="left:636px;top:712px;width:24px;height:21px;border:1px solid #3d8ee0;background:#f4f9ff"></div>
<svg style="left:640px;top:714px" width="17" height="17"><rect x="1.5" y="1" width="14" height="13.5" fill="#000"/><g fill="#ffff00"><rect x="2.5" y="2" width="3.5" height="3"/><rect x="7" y="2" width="3.5" height="3"/><rect x="11.5" y="2" width="3" height="3"/><rect x="7" y="6" width="3.5" height="3.5"/><rect x="11.5" y="6" width="3" height="3.5"/><rect x="7" y="10.5" width="3.5" height="3"/><rect x="11.5" y="10.5" width="3" height="3"/><rect x="2.5" y="6" width="3.5" height="3"/></g><path d="M1.8 9.5V14A3.2 1.8 0 0 0 8.2 14V9.5" fill="#ffff40" stroke="#000" stroke-width="0.9"/><ellipse cx="5" cy="9.5" rx="3.2" ry="1.8" fill="#ffffa0" stroke="#000" stroke-width="0.9"/><path d="M1.8 11.8A3.2 1.8 0 0 0 8.2 11.8" fill="none" stroke="#000" stroke-width="0.6"/></svg>
<svg style="left:665px;top:714px" width="33" height="19"><path d="M8 1.5L2 11H6L3 17.5L13 7H9L12 1.5Z" fill="#303030" transform="translate(1.5 1)"/><path d="M8 1L2 10.5H6L3 17L12 6.5H8L11 1Z" fill="#ffe800" stroke="#404040" stroke-width="0.5"/><rect x="14" y="2" width="14" height="13" fill="#303030"/><rect x="14" y="1.5" width="13.5" height="12.5" fill="#40c8ff" stroke="#000" stroke-width="1.2"/><text x="16.5" y="12" font-family="Liberation Serif" font-weight="700" font-size="12" fill="#0000d0">F</text><path d="M23 10L31 13.5L23 17.5Z" fill="#101070"/></svg>
<svg style="left:706px;top:714px" width="18" height="19"><rect x="1.5" y="1.5" width="12" height="12.5" fill="#d0d0d0" stroke="#a8a8a8" stroke-width="1"/><text x="4" y="12" font-family="Liberation Serif" font-weight="700" font-size="11" fill="#a0a0a0">F</text><path d="M9.5 9L16.5 12.5L9.5 17Z" fill="#a8a8a8"/></svg>
<svg style="left:732px;top:715px" width="15" height="15"><rect x="0.8" y="0.8" width="12.4" height="12.4" fill="#40c8ff" stroke="#0000ff" stroke-width="1.6"/><text x="7" y="11.5" text-anchor="middle" font-family="Liberation Serif" font-weight="700" font-size="12" fill="#0000d0">U</text></svg>
<svg style="left:755px;top:715px" width="15" height="15"><rect x="0.8" y="0.8" width="12.4" height="12.4" fill="#40c8ff" stroke="#000" stroke-width="1.6"/><text x="7" y="11.5" text-anchor="middle" font-family="Liberation Serif" font-weight="700" font-size="10" fill="#5020a0">Ur</text></svg>
<svg style="left:778px;top:715px" width="15" height="15"><rect x="0.8" y="0.8" width="12.4" height="12.4" fill="#40c8ff" stroke="#0000ff" stroke-width="1.6"/><text x="7" y="11.5" text-anchor="middle" font-family="Liberation Serif" font-weight="700" font-size="12" fill="#0000d0">F</text></svg>
<svg style="left:800px;top:715px" width="14" height="14"><circle cx="7" cy="7" r="4.6" fill="#f02020" stroke="#a00000" stroke-width="0.6"/></svg>
<svg style="left:823px;top:713px" width="16" height="19"><circle cx="6" cy="6" r="4.5" fill="#f02020"/><text x="3" y="17" font-family="Liberation Serif" font-weight="700" font-size="9" fill="#000">LF</text></svg>
<svg style="left:845px;top:713px" width="18" height="18"><path d="M4 2H13L14 7H3Z" fill="#fff" stroke="#606060" stroke-width="0.9"/><path d="M1.5 7H16.5V14H1.5Z" fill="#b0b8c8" stroke="#505860" stroke-width="1"/><rect x="3" y="12" width="12" height="4" fill="#e8e8e8" stroke="#606060" stroke-width="0.8"/><rect x="12" y="9" width="2" height="1.5" fill="#20c020"/></svg>
<svg style="left:868px;top:713px" width="19" height="19"><path d="M2 2H9V12H2Z" fill="#dde4f0" stroke="#506080" stroke-width="0.9"/><path d="M5 5H12V15H5Z" fill="#e8eef8" stroke="#506080" stroke-width="0.9"/><path d="M8 10H18V16H8Z" fill="#b8c0d0" stroke="#505860" stroke-width="0.9"/></svg>
<svg style="left:894px;top:713px" width="17" height="19"><path d="M3 1H12L15 4V17H3Z" fill="#fff" stroke="#5878a8" stroke-width="1"/><rect x="1" y="4" width="9" height="8" fill="#2050c0"/><text x="1.8" y="11" font-family="Liberation Sans" font-weight="700" font-size="8" fill="#fff">W</text><path d="M5 14H13" stroke="#8aa0c0" stroke-width="1"/></svg>
<svg style="left:918px;top:713px" width="17" height="19"><path d="M3 1H12L15 4V17H3Z" fill="#fff" stroke="#5878a8" stroke-width="1"/><rect x="1" y="4" width="9" height="8" fill="#c02020"/><text x="1.8" y="11" font-family="Liberation Sans" font-weight="700" font-size="8" fill="#fff">W</text><path d="M5 14H13" stroke="#8aa0c0" stroke-width="1"/></svg>
<svg style="left:642px;top:742px" width="12" height="12"><path d="M1 6L6 1.5V4H11V8H6V10.5Z" fill="#3a7ae8" stroke="#1a4ab0" stroke-width="0.7"/></svg>
<div class="t" style="left:691.20px;top:743.00px;font-size:12px;color:#3070d0;letter-spacing:-0.248px;">Brief 3 of 42</div>
<svg style="left:791px;top:742px" width="12" height="12"><path d="M11 6L6 1.5V4H1V8H6V10.5Z" fill="#3a7ae8" stroke="#1a4ab0" stroke-width="0.7"/></svg>
<svg style="left:810px;top:738px" width="20" height="18"><path d="M1.5 1.5V13.5H13.5Z" fill="#7aa8ff" stroke="#1a48c8" stroke-width="1.3" stroke-linejoin="round"/><path d="M4 8V11H7Z" fill="#fff"/><rect x="2" y="12.5" width="16" height="4" fill="#e8a820" stroke="#a06010" stroke-width="0.7"/><path d="M4.5 12.8V14.3M7 12.8V14.3M9.5 12.8V14.3M12 12.8V14.3M14.5 12.8V14.3" stroke="#704000" stroke-width="0.6"/><path d="M8 11L16.5 2.5" stroke="#8a5a10" stroke-width="3.6" stroke-linecap="round"/><path d="M8 11L16.5 2.5" stroke="#ffd040" stroke-width="2.2" stroke-linecap="round"/><path d="M15.5 1.5L18 4" stroke="#e07080" stroke-width="1.8"/></svg>
<svg style="left:832px;top:747px" width="7" height="5"><path d="M0.5 0.5H6L3.25 3.5Z" fill="#000"/></svg>
<div class="a" style="left:841px;top:738px;width:24px;height:20px;border:1px solid #3d8ee0;background:#f4f9ff"></div>
<svg style="left:846px;top:741px" width="14" height="14"><rect x="4.5" y="1" width="5" height="6" fill="#606060" stroke="#202020" stroke-width="0.8"/><rect x="2.5" y="7" width="9" height="1.5" fill="#202020"/><path d="M7 8.5V13" stroke="#202020" stroke-width="1.2"/></svg>
<div class="a" style="left:866px;top:739px;width:62px;height:20px;background:#f8f8f8"></div>
<div class="t" style="left:870.20px;top:743.00px;font-size:12px;letter-spacing:-0.705px;">Case 001 :</div>
<svg style="left:931px;top:747px" width="7" height="5"><path d="M0.5 0.5H6L3.25 3.5Z" fill="#000"/></svg>
<div class="a" style="left:942px;top:739px;width:63px;height:20px;background:#f8f8f8"></div>
<div class="t" style="left:947.30px;top:743.00px;font-size:12px;letter-spacing:-0.037px;">Portion 5</div>
<div class="a" style="left:1005px;top:739px;width:12px;height:20px;background:#f4f4f4"></div>
<svg style="left:1008px;top:747px" width="7" height="5"><path d="M0.5 0.5H6L3.25 3.5Z" fill="#000"/></svg>
<div class="a" style="left:1px;top:762px;width:40px;height:158px;background:#f7f7f7"></div>
<svg style="left:6px;top:766px" width="30" height="33"><defs><linearGradient id="bg766" x1="0" y1="0" x2="0" y2="1"><stop offset="0" stop-color="#d8e0ff"/><stop offset="0.3" stop-color="#a8b8ff"/><stop offset="0.5" stop-color="#4a6cff"/><stop offset="0.8" stop-color="#3458f8"/><stop offset="1" stop-color="#2440d0"/></linearGradient></defs><rect x="1" y="0.5" width="28" height="27" rx="4" fill="url(#bg766)" stroke="#1a2eb0" stroke-width="1.1"/><path d="M4.5 26.8H25L19.5 31.3Q15 32.6 10.5 31.3Z" fill="#ffd800"/><path d="M5 22V11Q10 6 15 5.5Q20 6 25 11V22" stroke="#fff" stroke-width="2.4" fill="none"/><g transform="rotate(-50 15 15)" fill="none" stroke="#fff" stroke-width="1.5"><rect x="6.5" y="12.5" width="9" height="5" rx="2.5"/><rect x="14" y="12.5" width="9" height="5" rx="2.5"/></g></svg>
<svg style="left:6px;top:806px" width="30" height="33"><defs><linearGradient id="bg806" x1="0" y1="0" x2="0" y2="1"><stop offset="0" stop-color="#d8e0ff"/><stop offset="0.3" stop-color="#a8b8ff"/><stop offset="0.5" stop-color="#4a6cff"/><stop offset="0.8" stop-color="#3458f8"/><stop offset="1" stop-color="#2440d0"/></linearGradient></defs><rect x="1" y="0.5" width="28" height="27" rx="4" fill="url(#bg806)" stroke="#1a2eb0" stroke-width="1.1"/><path d="M4.5 26.8H25L19.5 31.3Q15 32.6 10.5 31.3Z" fill="#ffd800"/><path d="M5 22V11Q10 6 15 5.5Q20 6 25 11V22" stroke="#fff" stroke-width="2.4" fill="none"/><path d="M17 7L12.5 17H16L12 25L20 13.5H16.5L19.5 7Z" fill="#fff"/></svg>
<svg style="left:6px;top:846px" width="30" height="33"><defs><linearGradient id="bg846" x1="0" y1="0" x2="0" y2="1"><stop offset="0" stop-color="#d8e0ff"/><stop offset="0.3" stop-color="#a8b8ff"/><stop offset="0.5" stop-color="#4a6cff"/><stop offset="0.8" stop-color="#3458f8"/><stop offset="1" stop-color="#2440d0"/></linearGradient></defs><rect x="1" y="0.5" width="28" height="27" rx="4" fill="url(#bg846)" stroke="#1a2eb0" stroke-width="1.1"/><path d="M4.5 26.8H25L19.5 31.3Q15 32.6 10.5 31.3Z" fill="#ffd800"/><path d="M5 22V11Q10 6 15 5.5Q20 6 25 11V22" stroke="#fff" stroke-width="2.4" fill="none"/><text x="15" y="23" text-anchor="middle" font-family="Liberation Serif" font-size="17" fill="#fff">δ</text></svg>
<div class="a" style="left:1px;top:882px;width:40px;height:38px;border:1px solid #1a7ae0;border-bottom:none;background:#f7f7f7"></div>
<svg style="left:6px;top:887px" width="30" height="30"><defs><linearGradient id="bgS" x1="0" y1="0" x2="0" y2="1"><stop offset="0" stop-color="#c8d4ff"/><stop offset="0.45" stop-color="#5a7cff"/><stop offset="0.5" stop-color="#3050f0"/><stop offset="1" stop-color="#2848e0"/></linearGradient></defs><rect x="1" y="0.5" width="28" height="28" rx="4" fill="url(#bgS)" stroke="#1a30b0" stroke-width="1"/><path d="M5 24V11L15 5L25 11V24" stroke="#fff" stroke-width="2.2" fill="none"/><circle cx="12" cy="11" r="6.5" fill="#6a8aff" stroke="#fff" stroke-width="1.6"/><path d="M16.5 15.5L24 23" stroke="#fff" stroke-width="3.2"/><text x="12" y="15" text-anchor="middle" font-family="Liberation Sans" font-weight="700" font-size="10" fill="#fff">S</text></svg>
<div class="a" style="left:41px;top:762px;width:1221px;height:21px;background:#f0f0f0"></div>
<div class="a" style="left:47px;top:763px;width:167px;height:21px;background:#fff"></div>
<div class="a" style="left:215.5px;top:763px;width:159.5px;height:19.5px;background:linear-gradient(#f8f8f8,#ececec)"></div>
<div class="a" style="left:378px;top:763px;width:162.5px;height:19.5px;background:linear-gradient(#f8f8f8,#ececec)"></div>
<div class="a" style="left:543px;top:763px;width:170px;height:19.5px;background:linear-gradient(#f8f8f8,#ececec)"></div>
<div class="a" style="left:715.5px;top:763px;width:141.5px;height:19.5px;background:linear-gradient(#f8f8f8,#ececec)"></div>
<div class="a" style="left:214px;top:783px;width:1048px;height:1px;background:#fcfcfc"></div>
<div class="a" style="left:1261px;top:783px;width:1px;height:150px;background:#fcfcfc"></div>
<div class="t" style="left:87.20px;top:772.00px;font-size:11.5px;letter-spacing:-0.410px;">Section AutoDesign</div>
<div class="t" style="left:256.30px;top:769.00px;font-size:11px;letter-spacing:-0.012px;">Lateral Restraints</div>
<div class="t" style="left:414.60px;top:769.00px;font-size:11px;letter-spacing:-0.110px;">Axial with Moment</div>
<div class="t" style="left:583.00px;top:769.00px;font-size:11px;letter-spacing:-0.080px;">Torsional Restraints</div>
<div class="t" style="left:754.60px;top:769.00px;font-size:11px;letter-spacing:-0.091px;">Stability Check</div>
<div class="a" style="left:49px;top:792px;width:858px;height:31px;border:1px solid #dcdcdc;border-radius:2px;background:#efefef"></div>
<div class="a" style="left:58px;top:786px;width:100px;height:10px;background:#f0f0f0"></div>
<div class="t" style="left:60.70px;top:787.00px;font-size:12px;letter-spacing:-0.570px;">Design Brief 3 of 42</div>
<div class="a" style="left:54px;top:800px;width:229px;height:20px;background:#e5e5e5;border:1px solid #adadad"></div>
<div class="t" style="left:57.60px;top:804.00px;font-size:12px;letter-spacing:-0.644px;width:207px;overflow:hidden;">A+M - Column 1 : Members 181 &amp; 185 ( A\!</div>
<svg style="left:268px;top:805px" width="11" height="8"><path d="M1 1.5L5.5 6L10 1.5" stroke="#505050" stroke-width="1.1" fill="none"/></svg>
<div class="a" style="left:286px;top:799px;width:12px;height:21px;background:#f4f4f4"></div>
<svg style="left:286.5px;top:800.5px" width="9" height="18"><path d="M1 4.5L4.5 1L8 4.5M1 12.5L4.5 16L8 12.5" stroke="#4a5a7a" stroke-width="2" fill="none"/></svg>
<div class="a" style="left:303px;top:798px;width:27px;height:22px;background:#f4f4f4"></div>
<svg style="left:308px;top:800px" width="20" height="18"><path d="M1.5 1.5V13.5H13.5Z" fill="#7aa8ff" stroke="#1a48c8" stroke-width="1.3" stroke-linejoin="round"/><path d="M4 8V11H7Z" fill="#fff"/><rect x="2" y="12.5" width="16" height="4" fill="#e8a820" stroke="#a06010" stroke-width="0.7"/><path d="M4.5 12.8V14.3M7 12.8V14.3M9.5 12.8V14.3M12 12.8V14.3M14.5 12.8V14.3" stroke="#704000" stroke-width="0.6"/><path d="M8 11L16.5 2.5" stroke="#8a5a10" stroke-width="3.6" stroke-linecap="round"/><path d="M8 11L16.5 2.5" stroke="#ffd040" stroke-width="2.2" stroke-linecap="round"/><path d="M15.5 1.5L18 4" stroke="#e07080" stroke-width="1.8"/></svg>
<div class="t" style="left:426.50px;top:804.00px;font-size:12px;letter-spacing:-0.529px;">Brief Title</div>
<div class="a" style="left:475px;top:799px;width:329px;height:20px;background:#fff;border:1px solid #7a7a7a"></div>
<div class="a" style="left:810px;top:798px;width:21px;height:21px;background:#f4f4f4"></div>
<svg style="left:814px;top:804px" width="14" height="13"><path d="M1 1L12.5 12M12.5 1L1 12" stroke="#e02020" stroke-width="2"/></svg>
<div class="a" style="left:833px;top:798px;width:22px;height:21px;background:#f4f4f4"></div>
<svg style="left:837px;top:803px" width="16" height="14"><path d="M1 1H7L9 3V10H1Z" fill="#fff" stroke="#4060a0" stroke-width="0.9"/><path d="M6 4H12L14 6V13H6Z" fill="#dde8ff" stroke="#4060a0" stroke-width="0.9"/><path d="M7.5 8H12.5M7.5 10H12.5" stroke="#4060a0" stroke-width="0.7"/></svg>
<div class="a" style="left:857px;top:798px;width:22px;height:21px;background:#f4f4f4"></div>
<div class="t" style="left:864.00px;top:804.00px;font-size:11px;">S</div>
<div class="a" style="left:885px;top:798px;width:17px;height:21px;background:#f4f4f4"></div>
<svg style="left:889.5px;top:802px" width="9" height="16"><path d="M1 4.5L4.5 1L8 4.5M1 10.5L4.5 14L8 10.5" stroke="#4a5a7a" stroke-width="2" fill="none"/></svg>
<div class="a" style="left:50px;top:828px;width:1000px;height:23.5px;background:linear-gradient(#fdfdfd,#efefef);border-radius:3px 3px 0 0"></div>
<div class="a" style="left:1049px;top:831px;width:1px;height:20.5px;background:linear-gradient(rgba(0,0,0,0),#6a6a6a)"></div>
<div class="a" style="left:50px;top:852.5px;width:1000px;height:23.8px;background:linear-gradient(#fdfdfd,#efefef);border-radius:3px 3px 0 0"></div>
<div class="a" style="left:1049px;top:855.5px;width:1px;height:20.8px;background:linear-gradient(rgba(0,0,0,0),#6a6a6a)"></div>
<div class="a" style="left:50px;top:878px;width:1000px;height:24px;background:linear-gradient(#fdfdfd,#efefef);border-radius:3px 3px 0 0"></div>
<div class="a" style="left:1049px;top:881px;width:1px;height:21px;background:linear-gradient(rgba(0,0,0,0),#6a6a6a)"></div>
<svg style="left:53px;top:832px" width="100" height="18"><g fill="#a0a0a0"><path d="M1 3H6V4.5H4.5V12.5H6V14H1V12.5H2.5V4.5H1Z"/><path d="M8 3H13V4.5H11.5V12.5H13V14H8V12.5H9.5V4.5H8Z"/></g><rect x="21" y="2" width="13" height="13" fill="#b8b8b8" stroke="#a0a0a0"/><path d="M24.5 4.5H30.5V6H28.3V11.5H30.5V13H24.5V11.5H26.7V6H24.5Z" fill="#8a8a8a"/><path d="M44 3H56V6.5H54.5V5H51.5V13H53.5V15H46.5V13H48.5V5H45.5V6.5H44Z" fill="#303030"/><g stroke="#a0a0a0" fill="none" stroke-width="1.2"><path d="M64 3H78M64 14H78"/><circle cx="68" cy="8.5" r="2.3"/><circle cx="74" cy="8.5" r="2.3"/></g><path d="M87 4H93M87 4V15H98V9" stroke="#a0a0a0" stroke-width="1.3" fill="none"/><path d="M91 11L98 2.5L100 4.5L93 12.5L90.5 13Z" fill="#b0b0b0"/></svg>
<div class="a" style="left:156px;top:830px;width:146px;height:22px;background:#fff"></div>
<div class="t" style="left:159.00px;top:836.00px;font-size:12px;">UB</div>
<div class="a" style="left:290px;top:830px;width:12px;height:22px;background:#f4f4f4"></div>
<svg style="left:292px;top:840px" width="7" height="5"><path d="M0.5 0.5H6L3.25 3.5Z" fill="#000"/></svg>
<div class="a" style="left:303px;top:830px;width:142px;height:22px;background:#fff"></div>
<div class="t" style="left:307.00px;top:836.00px;font-size:12px;letter-spacing:-0.872px;">S 355</div>
<div class="a" style="left:445px;top:830px;width:12px;height:22px;background:#f4f4f4"></div>
<svg style="left:447px;top:840px" width="7" height="5"><path d="M0.5 0.5H6L3.25 3.5Z" fill="#000"/></svg>
<div class="a" style="left:457px;top:830px;width:24px;height:22px;background:#e8e8e8"></div>
<svg style="left:462px;top:835px" width="16" height="15"><path d="M1 1H9V9H1Z" fill="none" stroke="#404040" stroke-width="1.3"/><path d="M5 5H13V13H5Z" fill="#e8e8e8" stroke="#404040" stroke-width="1.3"/><rect x="7.5" y="7.5" width="3" height="3" fill="#404040"/></svg>
<div class="a" style="left:481px;top:830px;width:269px;height:22px;background:#fff"></div>
<div class="t" style="left:486.00px;top:836.00px;font-size:12px;letter-spacing:-0.665px;">0362 533x312 UB 219</div>
<div class="a" style="left:750px;top:830px;width:12px;height:22px;background:#f4f4f4"></div>
<svg style="left:752px;top:840px" width="7" height="5"><path d="M0.5 0.5H6L3.25 3.5Z" fill="#000"/></svg>
<svg style="left:767.5px;top:835px" width="9" height="13.5"><path d="M1 4.5L4.5 1L8 4.5M1 8.0L4.5 11.5L8 8.0" stroke="#4a5a7a" stroke-width="2" fill="none"/></svg>
<div class="t" style="left:783.30px;top:836.00px;font-size:12px;letter-spacing:0.131px;">H.min</div>
<div class="a" style="left:821px;top:830px;width:39px;height:22px;background:#fff"></div>
<div class="t" style="left:824.50px;top:835.00px;font-size:11px;">0</div>
<div class="t" style="left:865.40px;top:836.00px;font-size:12px;letter-spacing:-0.214px;">H.max</div>
<div class="a" style="left:904px;top:830px;width:40px;height:22px;background:#fff"></div>
<div class="t" style="left:907.00px;top:835.00px;font-size:11px;">0</div>
<svg style="left:53px;top:857px" width="50" height="19"><path d="M2 5.5V16.5H6V11L15 5V2L6 7V5.5Z" fill="#fff" stroke="#000" stroke-width="1.1"/><path d="M6 11L15 2M9 11L15 7" stroke="#000" stroke-width="0.8"/><g fill="#ffd800" stroke="#202020" stroke-width="0.6"><path d="M28 5H36V2.5L40 6.5L36 10.5V8H28Z"/><path d="M36 15H28V17.5L24 13.5L28 9.5V12H36Z"/></g><g fill="#e02020"><circle cx="23" cy="10" r="0.9"/><circle cx="25" cy="7" r="0.9"/><circle cx="41" cy="11" r="0.9"/><circle cx="43" cy="14" r="0.9"/><circle cx="39" cy="16" r="0.9"/><circle cx="27" cy="16" r="0.9"/><circle cx="32" cy="3" r="0.9"/></g><path d="M48.5 4V16" stroke="#a0a0a0" stroke-width="1"/></svg>
<div class="t" style="left:110.00px;top:860.00px;font-size:12px;letter-spacing:-0.157px;">XH1(m)</div>
<div class="a" style="left:157px;top:856px;width:38px;height:21px;background:#fff"></div>
<div class="t" style="left:161.50px;top:860.00px;font-size:12px;letter-spacing:-0.506px;">5.781</div>
<svg style="left:203px;top:860px" width="9" height="13.5"><path d="M1 4.5L4.5 1L8 4.5M1 8.0L4.5 11.5L8 8.0" stroke="#4a5a7a" stroke-width="2" fill="none"/></svg>
<div class="t" style="left:221.00px;top:860.00px;font-size:12px;letter-spacing:-0.124px;">XH2(m)</div>
<div class="a" style="left:268px;top:856px;width:41px;height:21px;background:#fff"></div>
<div class="t" style="left:272.00px;top:860.00px;font-size:12px;">0</div>
<svg style="left:314px;top:860px" width="9" height="13.5"><path d="M1 4.5L4.5 1L8 4.5M1 8.0L4.5 11.5L8 8.0" stroke="#4a5a7a" stroke-width="2" fill="none"/></svg>
<div class="t" style="left:329.20px;top:860.00px;font-size:12px;letter-spacing:0.750px;">mm</div>
<div class="t" style="left:358.80px;top:860.00px;font-size:12px;letter-spacing:-0.049px;">Dep1 (H/D)</div>
<div class="a" style="left:426px;top:856px;width:40px;height:21px;background:#fff"></div>
<div class="t" style="left:430.00px;top:860.00px;font-size:12px;">1</div>
<svg style="left:471px;top:860px" width="9" height="13.5"><path d="M1 4.5L4.5 1L8 4.5M1 8.0L4.5 11.5L8 8.0" stroke="#4a5a7a" stroke-width="2" fill="none"/></svg>
<div class="t" style="left:489.20px;top:860.00px;font-size:12px;letter-spacing:-0.159px;">Dep2 (H/D)</div>
<div class="a" style="left:556px;top:856px;width:40px;height:21px;background:#fff"></div>
<div class="t" style="left:559.50px;top:860.00px;font-size:12px;">2</div>
<svg style="left:601px;top:860px" width="9" height="13.5"><path d="M1 4.5L4.5 1L8 4.5M1 8.0L4.5 11.5L8 8.0" stroke="#4a5a7a" stroke-width="2" fill="none"/></svg>
<div class="t" style="left:619.50px;top:860.00px;font-size:12px;letter-spacing:-0.074px;">Haunch Cut  if not as beam</div>
<div class="t" style="left:773.20px;top:861.00px;font-size:12px;letter-spacing:-0.236px;">Inc.</div>
<div class="a" style="left:797px;top:856px;width:29px;height:21px;background:#fff"></div>
<div class="t" style="left:799.70px;top:860.00px;font-size:12px;letter-spacing:-0.465px;">0.05</div>
<svg style="left:831px;top:860px" width="9" height="13.5"><path d="M1 4.5L4.5 1L8 4.5M1 8.0L4.5 11.5L8 8.0" stroke="#4a5a7a" stroke-width="2" fill="none"/></svg>
<div class="a" style="left:54.6px;top:904px;width:140.0px;height:22px;background:linear-gradient(#f9f9f9,#eeeeee)"></div>
<svg style="left:67px;top:907px" width="16" height="20"><path d="M9 1L2 10.5H6.5L3 19L13 8H8.5L12 1Z" fill="#ffe000" stroke="#303030" stroke-width="0.9" stroke-linejoin="round"/></svg>
<div class="t" style="left:85.00px;top:913.00px;font-size:10px;letter-spacing:-0.408px;text-shadow:1px 1px 1px #b0b0b0;">Auto Size Current Member</div>
<div class="a" style="left:213.3px;top:904px;width:150.7px;height:22px;background:linear-gradient(#f9f9f9,#eeeeee)"></div>
<svg style="left:247px;top:907px" width="16" height="20"><path d="M9 1L2 10.5H6.5L3 19L13 8H8.5L12 1Z" fill="#ffe000" stroke="#303030" stroke-width="0.9" stroke-linejoin="round"/></svg>
<div class="t" style="left:269.50px;top:913.00px;font-size:10px;letter-spacing:-0.233px;text-shadow:1px 1px 1px #b0b0b0;">Elastic Analysis</div>
<div class="a" style="left:371.6px;top:904px;width:135.4px;height:22px;background:linear-gradient(#f9f9f9,#eeeeee)"></div>
<svg style="left:395px;top:907px" width="16" height="20"><path d="M9 1L2 10.5H6.5L3 19L13 8H8.5L12 1Z" fill="#ffe000" stroke="#303030" stroke-width="0.9" stroke-linejoin="round"/></svg>
<div class="t" style="left:417.60px;top:913.00px;font-size:10px;letter-spacing:-0.170px;text-shadow:1px 1px 1px #b0b0b0;">Plastic Analysis</div>
<div class="a" style="left:529px;top:904px;width:23px;height:22px;background:linear-gradient(#f9f9f9,#eeeeee)"></div>
<div class="a" style="left:560px;top:904px;width:23px;height:22px;background:linear-gradient(#f9f9f9,#eeeeee)"></div>
<svg style="left:531px;top:906px" width="16" height="20"><path d="M9 1L2 10.5H6.5L3 19L13 8H8.5L12 1Z" fill="#ffe000" stroke="#303030" stroke-width="0.9" stroke-linejoin="round"/></svg>
<svg style="left:562px;top:906px" width="16" height="20"><path d="M9 1L2 10.5H6.5L3 19L13 8H8.5L12 1Z" fill="#ffe000" stroke="#303030" stroke-width="0.9" stroke-linejoin="round"/></svg>
<div class="t" style="left:543.00px;top:915.00px;font-size:9px;color:#1a30e0;">V</div>
<div class="t" style="left:570.00px;top:915.00px;font-size:9px;color:#1a30e0;">Gr</div>
<div class="a" style="left:1px;top:935px;width:1264px;height:1px;background:#d7d7d7"></div>
<div class="t" style="left:15.20px;top:941.00px;font-size:12px;letter-spacing:-0.281px;">View: Grid Line : 5 - 5</div>
<div class="a" style="left:223.5px;top:938px;width:124px;height:17px;background:#e6e6e6;border:1px solid #bcbcbc"></div>
<svg style="left:351px;top:938px" width="17" height="16"><path d="M4 1.5H12L13 6H3Z" fill="#fff" stroke="#606878" stroke-width="0.9"/><path d="M1 6H16V12H1Z" fill="#a8b4c8" stroke="#505868" stroke-width="1"/><rect x="3" y="11" width="11" height="4" fill="#e8e8e8" stroke="#606060" stroke-width="0.8"/><rect x="12" y="8" width="2" height="2" fill="#20c020"/></svg>
<svg style="left:372px;top:944px" width="8" height="5"><path d="M0.5 0.5H7L3.75 4Z" fill="#202020"/></svg>
<div class="t" style="left:395.40px;top:941.00px;font-size:12px;letter-spacing:-0.469px;">PDF session closed</div>
<svg style="left:1250px;top:943px" width="12" height="12"><g fill="#8a8a8a"><rect x="8" y="2" width="2" height="2"/><rect x="4" y="6" width="2" height="2"/><rect x="8" y="6" width="2" height="2"/><rect x="0" y="10" width="2" height="2"/><rect x="4" y="10" width="2" height="2"/><rect x="8" y="10" width="2" height="2"/></g></svg>
<div id="border"></div>
</body></html>
